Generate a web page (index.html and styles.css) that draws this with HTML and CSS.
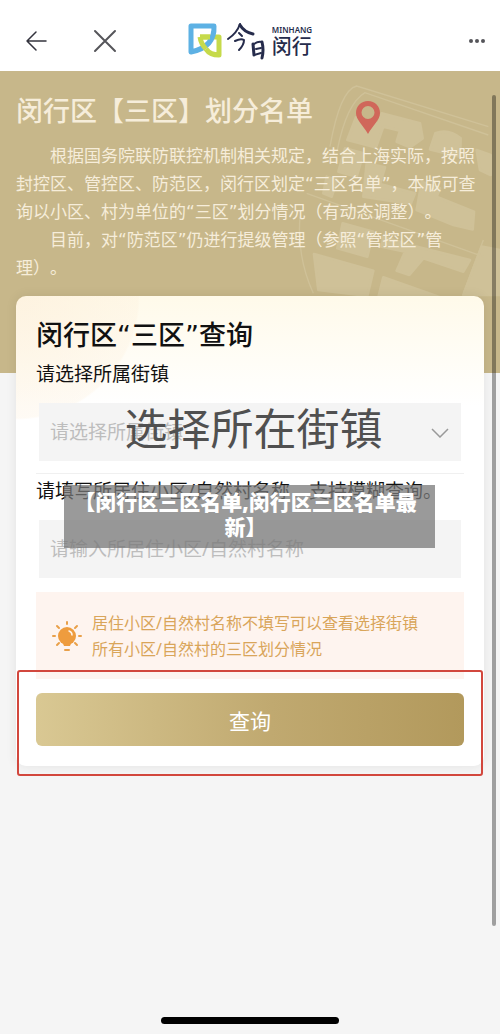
FILE: index.html
```
<!DOCTYPE html>
<html lang="zh-CN">
<head>
  <meta charset="UTF-8">
  <meta name="viewport" content="width=device-width, initial-scale=1">
  <title>闵行区“三区”查询</title>
  <link rel="stylesheet" href="styles.css">
</head>
<body>
  <header class="topbar">
    <div class="nav">
      <button type="button" class="icon-btn" aria-label="返回">
        <svg width="24" height="24" viewBox="0 0 24 24" fill="none" stroke="#33333d" stroke-width="1.5" stroke-linecap="round" stroke-linejoin="round"><path d="M22 12H3M12 3L3 12l9 9"/></svg>
      </button>
      <button type="button" class="icon-btn" aria-label="关闭">
        <svg width="24" height="24" viewBox="0 0 24 24" fill="none" stroke="#55555a" stroke-width="2" stroke-linecap="round"><path d="M2 2l20 20M22 2L2 22"/></svg>
      </button>
    </div>
    <div class="logo">
      <svg width="34" height="36" viewBox="0 0 34 36" fill="none" stroke-width="5" stroke-linejoin="round">
        <path stroke="#c6da4a" d="M12 14H31V32Q22 32 18 26"/>
        <path stroke="#5db1e4" d="M3 3H26Q27 24 3 29Z"/>
        <path stroke="#c6da4a" d="M12 14H22M12 14Q13 21 18 26"/>
      </svg>
      <svg width="40" height="40" viewBox="0 0 40 40" fill="none" stroke="#262c4c" stroke-width="3" stroke-linecap="round" stroke-linejoin="round">
        <path stroke-width="2" d="M13 3Q10 12 1 18"/>
        <path d="M13 4Q17 11 26 13"/>
        <path stroke-width="2" d="M12 12l3 3M8 20Q14 17 17 19Q17 24 12 29"/>
        <path d="M26 23L27 34M35 21Q37 29 35 37"/>
        <path stroke-width="2" d="M27 23Q31 20 35 21M29 28L34 27M27 34L34 32"/>
      </svg>
      <div class="logo-name">
        <span class="logo-en">MINHANG</span>
        <span class="logo-cn">闵行</span>
      </div>
    </div>
    <button type="button" class="icon-btn more" aria-label="更多">
      <svg width="16" height="24" viewBox="0 0 16 24" fill="#55555a"><circle cx="2" cy="12" r="2"/><circle cx="8" cy="12" r="2"/><circle cx="14" cy="12" r="2"/></svg>
    </button>
  </header>

  <main>
    <section class="hero">
      <svg class="map" width="250" height="302" viewBox="0 33 750 906" aria-hidden="true">
        <g fill="#cfc198" stroke="#cfc198" stroke-width="8" stroke-linejoin="round">
          <path d="M318 172L385 190L395 160L510 190L518 235L480 262L440 245L450 212L400 200L378 262L292 240Z"/>
          <path d="M556 220Q595 205 632 235L630 290L540 268Z"/>
          <path d="M285 265L340 280L320 350L265 335Z"/>
          <path d="M350 310L405 322L390 372L495 400L482 432L340 410Z"/>
          <path d="M515 365L570 385L560 410L672 455L668 508L610 495L500 450Z"/>
          <path d="M230 350L262 360L245 410L220 400Z"/>
          <path d="M278 490L370 515L352 590L262 565Z"/>
          <path d="M192 582L370 632L352 708L205 690Z"/>
          <path d="M400 530L480 555L520 565L660 600L640 635L520 595L478 645L440 632L465 575L395 560Z"/>
          <path d="M695 560L750 570V705H640Z"/>
          <path d="M400 652L570 712H385Z"/>
          <path d="M680 270L722 285V345L690 330Z"/>
        </g>
        <path d="M240 260Q270 90 320 78L715 200M262 270Q290 130 345 98L715 225M170 400L700 590M150 470Q140 590 190 700M700 540L640 700" fill="none" stroke="#cfc198" stroke-width="4"/>
      </svg>
      <svg class="pin" width="24" height="33" viewBox="0 0 24 33"><path fill="#d0675a" fill-rule="evenodd" d="M12 0C5 0 0 5 0 12c0 7 7 12 12 21c5-9 12-14 12-21C24 5 19 0 12 0zm0 5a6.500 6.500 0 1 1 0 13a6.500 6.500 0 0 1 0-13z"/></svg>
      <h1>闵行区【三区】划分名单</h1>
      <p>根据国务院联防联控机制相关规定，结合上海实际，按照封控区、管控区、防范区，闵行区划定“三区名单”，本版可查询以小区、村为单位的“三区”划分情况（有动态调整）。</p>
      <p>目前，对“防范区”仍进行提级管理（参照“管控区”管理）。</p>
    </section>

    <form class="card">
      <h2>闵行区“三区”查询</h2>
      <label for="street">请选择所属街镇</label>
      <div class="field">
        <select id="street">
          <option>请选择所属街镇</option>
        </select>
        <svg class="chevron" width="18" height="10" viewBox="0 0 18 10" fill="none" stroke="#999" stroke-width="1.5"><path d="M1 1l8 8l8-8"/></svg>
        <span class="field-note">选择所在街镇</span>
      </div>
      <div class="village">
        <label for="village">请填写所居住小区/自然村名称，支持模糊查询。</label>
        <div class="banner">【闵行区三区名单,闵行区三区名单最新】</div>
      </div>
      <div class="field">
        <input id="village" type="text" placeholder="请输入所居住小区/自然村名称">
      </div>
      <div class="tip">
        <svg width="30" height="30" viewBox="0 0 30 30" fill="none" stroke="#e9a04a" stroke-width="2" stroke-linecap="round">
          <circle cx="15" cy="15" r="9" fill="#ee9c3e" stroke="none"/>
          <path fill="#ee9c3e" stroke="none" d="M10 20h10l-2 5h-6z"/>
          <path d="M15 1v2M5 5l2 2M25 5l-2 2M1 15h2M27 15h2M5 24l2-2M25 24l-2-2M13 29h4"/>
          <path stroke="#fff3e8" stroke-width="1.500" d="M17 10q3 1 3 4"/>
        </svg>
        <p>居住小区/自然村名称不填写可以查看选择街镇所有小区/自然村的三区划分情况</p>
      </div>
      <div class="action">
        <button type="button" class="submit">查询</button>
      </div>
    </form>
  </main>
  <div class="scrollbar"></div>
  <div class="home-indicator"></div>
</body>
</html>
```
FILE: styles.css
```
* {
  box-sizing: border-box;
}

body {
  margin: 0;
  min-height: 100vh;
  position: relative;
  display: flex;
  flex-direction: column;
  background: #f5f5f5;
  color: #111;
  font-family: "Noto Sans", "Noto Sans CJK SC", sans-serif;
  text-spacing-trim: space-all;
}

h1, h2, p {
  margin: 0;
}

button, input, select {
  font-family: inherit;
  border: 0;
  padding: 0;
}

.topbar {
  display: grid;
  grid-template-columns: 1fr auto 1fr;
  align-items: center;
  height: 71px;
  padding: 10px 15px 0;
  background: #fff;
}

.nav {
  display: flex;
  gap: 45px;
  padding-left: 9px;
}

.icon-btn {
  display: flex;
  background: none;
}

.more {
  justify-self: end;
}

.logo {
  display: flex;
  align-items: center;
  gap: 5px;
}

.logo-name {
  display: flex;
  flex-direction: column;
  color: #262c4c;
}

.logo-en {
  font-size: 8px;
  line-height: 12px;
  font-weight: 600;
}

.logo-cn {
  font-size: 20px;
  line-height: 22px;
  font-weight: 500;
}

.hero {
  position: relative;
  padding: 20px 20px 91px 16px;
  background: #c7b78a;
  color: #f6edda;
}

.map {
  position: absolute;
  top: 0;
  right: 0;
}

.pin {
  position: absolute;
  top: 30px;
  right: 120px;
}

.hero h1 {
  position: relative;
  margin-bottom: 11px;
  font-size: 27px;
  line-height: 40px;
  font-weight: 500;
}

.hero p {
  position: relative;
  font-family: "DejaVu Sans", "Noto Sans CJK SC", sans-serif;
  font-size: 17px;
  line-height: 28px;
  text-indent: 2em;
}

.card {
  position: relative;
  margin: -77px 16px 0;
  padding: 20px;
  border-radius: 10px;
  background:
    radial-gradient(circle at 0 0, rgba(253, 240, 220, .7), rgba(253, 240, 220, .3) 122px, transparent 124px) no-repeat,
    linear-gradient(#fffaea, #fff 110px);
  box-shadow: 0 0 12px rgba(0, 0, 0, .08);
}

.card h2 {
  font-family: "DejaVu Sans", "Noto Sans CJK SC", sans-serif;
  font-size: 27px;
  line-height: 40px;
  font-weight: 500;
}

.card label {
  display: block;
  font-size: 19px;
  line-height: 36px;
}

.field {
  position: relative;
  margin: 11px 3px 0;
}

.field select,
.field input {
  display: block;
  width: 100%;
  height: 58px;
  padding: 0 11px;
  appearance: none;
  border-radius: 0;
  background: #f4f4f4;
  color: #bdbdbd;
  font-size: 19px;
}

.field input::placeholder {
  color: #bdbdbd;
}

.chevron {
  position: absolute;
  top: 25px;
  right: 12px;
}

.field-note {
  position: absolute;
  top: 0;
  left: 0;
  right: 0;
  padding-left: 7px;
  color: #505050;
  font-size: 43px;
  line-height: 52px;
  text-align: center;
  pointer-events: none;
}

.village {
  position: relative;
  margin-top: 12px;
  border-top: 1px solid #f0f0f0;
}

.village label {
  line-height: 35px;
}

.banner {
  position: absolute;
  top: 11px;
  left: 28px;
  right: 29px;
  padding: 5px 16px 8px 8px;
  background: rgba(120, 120, 120, .75);
  color: #fff;
  font-size: 21px;
  line-height: 25px;
  font-weight: 900;
  text-align: center;
  z-index: 1;
}

.tip {
  display: flex;
  align-items: center;
  gap: 10px;
  margin-top: 14px;
  padding: 18px 36px 17px 16px;
  background: #fef4ef;
  color: #d9a55a;
}

.tip svg {
  flex: none;
}

.tip p {
  font-size: 16px;
  line-height: 26px;
}

/* highlighted area around the submit button */
.action {
  position: relative;
  margin: -9px -19px -30px;
  padding: 21px 17px 28px;
  border: 2px solid #d2473d;
  border-radius: 3px;
}

.submit {
  display: block;
  width: 100%;
  height: 53px;
  border-radius: 6px;
  background: linear-gradient(90deg, #d9c893, #c0a970 55%, #b2995c);
  color: #fff;
  font-size: 21px;
}

.scrollbar {
  position: absolute;
  top: 95px;
  right: 4px;
  bottom: 108px;
  width: 4px;
  border-radius: 2px;
  background: rgba(0, 0, 0, .35);
}

.home-indicator {
  width: 178px;
  height: 7px;
  margin: auto auto 10px;
  border-radius: 4px;
  background: #000;
}
```
